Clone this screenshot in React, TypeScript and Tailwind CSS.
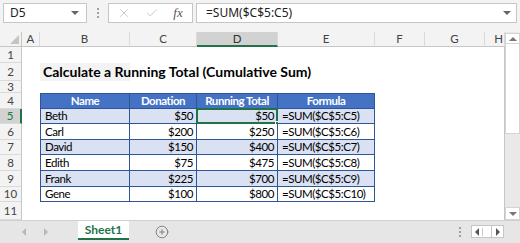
import { X, Check, CirclePlus } from "lucide-react";

const rows = [
  ["Beth", "$50", "$50", "=SUM($C$5:C5)"],
  ["Carl", "$200", "$250", "=SUM($C$5:C6)"],
  ["David", "$150", "$400", "=SUM($C$5:C7)"],
  ["Edith", "$75", "$475", "=SUM($C$5:C8)"],
  ["Frank", "$225", "$700", "=SUM($C$5:C9)"],
  ["Gene", "$100", "$800", "=SUM($C$5:C10)"],
];

const heads = ["Name", "Donation", "Running Total", "Formula"];
const cols = ["A", "B", "C", "D", "E", "F", "G", "H"];

function Tri({ dir, className }: { dir: "up" | "down" | "left" | "right"; className?: string }) {
  const pts = {
    up: "0,5 4,1 8,5",
    down: "0,1 8,1 4,5",
    left: "5,0 5,8 1,4",
    right: "1,0 1,8 5,4",
  }[dir];
  const box = dir === "up" || dir === "down" ? "0 0 8 6" : "0 0 6 8";
  const w = dir === "up" || dir === "down" ? 8 : 6;
  const h = dir === "up" || dir === "down" ? 6 : 8;
  return (
    <svg width={w} height={h} viewBox={box} className={className}>
      <polygon points={pts} fill="currentColor" />
    </svg>
  );
}

function Dots() {
  return (
    <div className="flex flex-col gap-[2px]">
      <span className="h-[2px] w-[2px] bg-[#a0a0a0]" />
      <span className="h-[2px] w-[2px] bg-[#a0a0a0]" />
      <span className="h-[2px] w-[2px] bg-[#a0a0a0]" />
    </div>
  );
}

function TableCell({ r, c }: { r: number; c: number }) {
  // r: 0 = header row (row 4), 1..6 = data rows
  const isHead = r === 0;
  const striped = !isHead && r % 2 === 1;
  const bg = isHead ? "bg-[#4472c4]" : striped ? "bg-[#d9e1f2]" : "bg-white";
  const edge = `${c === 0 ? "border-l" : ""} ${r === 0 ? "border-t" : ""}`;
  const align = isHead
    ? "justify-center font-bold text-white"
    : c === 1 || c === 2
    ? "justify-end pr-[3px] text-black"
    : "justify-start pl-[4px] text-black";
  const text = isHead ? heads[c] : rows[r - 1][c];
  const selected = r === 1 && c === 2;
  return (
    <div
      className={`relative flex items-center border-r border-b border-[#2f5597] ${edge} ${bg} ${align} text-[11.5px] leading-none tracking-[-0.45px]`}
    >
      {text}
      {selected && (
        <>
          <div className="pointer-events-none absolute inset-[-1px] border-2 border-[#217346]" />
          <div className="absolute bottom-[-3px] right-[-3px] h-[5px] w-[5px] border border-white bg-[#217346]" />
        </>
      )}
    </div>
  );
}

function GridRow({ n }: { n: number }) {
  const sel = n === 5;
  return (
    <>
      <div
        className={`flex items-center justify-center border-b border-[#dadada] text-[11.5px] ${
          sel ? "border-r-2 border-r-[#217346] bg-[#d2d2d2] text-[#217346]" : "border-r border-r-[#c6c6c6] bg-[#f3f3f3] text-[#444]"
        }`}
      >
        {n}
      </div>
      {cols.map((col, i) => {
        if (n === 2 && col === "B") {
          return (
            <div key={col} className="relative z-10 flex items-end whitespace-nowrap pb-[2px] pl-[3px] text-[14px] font-bold leading-none text-black">
              Calculate a Running Total (Cumulative Sum)
            </div>
          );
        }
        if (n >= 4 && n <= 10 && i >= 1 && i <= 4) {
          return <TableCell key={col} r={n - 4} c={i - 1} />;
        }
        return <div key={col} className={col === "H" ? "border-r border-[#c6c6c6] bg-white" : "bg-white"} />;
      })}
    </>
  );
}

export default function App() {
  return (
    <div className="flex h-[243px] w-[520px] flex-col overflow-hidden bg-[#f3f3f3] font-['Lato',sans-serif]">
      {/* formula bar */}
      <div className="flex h-[32px] shrink-0 items-start gap-0 px-[3px] pt-[3px] font-['Noto_Sans',sans-serif] text-[12px] text-[#222]">
        <div className="flex h-[20px] w-[84px] items-center justify-between border border-[#c6c6c6] bg-white pl-[6px] pr-[7px]">
          <span>D5</span>
          <Tri dir="down" className="text-[#666]" />
        </div>
        <div className="flex h-[20px] w-[21px] items-center justify-center">
          <Dots />
        </div>
        <div className="flex h-[20px] w-[85px] items-center border border-[#c6c6c6] bg-white text-[#b4b4b4]">
          <span className="flex w-[30px] justify-center">
            <X size={14} strokeWidth={1.2} />
          </span>
          <span className="flex w-[26px] justify-center">
            <Check size={14} strokeWidth={1.2} />
          </span>
          <span className="flex w-[26px] justify-center font-['Liberation_Serif',serif] text-[13px] italic text-[#555]">
            fx
          </span>
        </div>
        <div className="ml-[3px] flex h-[20px] flex-1 items-center justify-between border border-[#c6c6c6] bg-white pl-[9px] pr-[5px]">
          <span>=SUM($C$5:C5)</span>
          <Tri dir="down" className="text-[#666]" />
        </div>
      </div>

      {/* sheet */}
      <div className="flex min-h-0 flex-1">
        <div className="grid w-[505px] grid-cols-[22px_18px_90px_67px_81px_97px_50px_60px_20px] grid-rows-[15px_16px_18px_12px_16px_15px_16px_15px_16px_16px_15px_18px] overflow-hidden">
          <div className="flex items-end justify-end border-r border-b border-[#c6c6c6] bg-[#f3f3f3] p-[2px]">
            <svg width="9" height="9" viewBox="0 0 9 9">
              <polygon points="9,0 9,9 0,9" fill="#c4c4c4" />
            </svg>
          </div>
          {cols.map((c) => (
            <div
              key={c}
              className={`flex items-center text-[11.5px] ${
                c === "H" ? "justify-end pr-[1px]" : "justify-center"
              } ${
                c === "D"
                  ? "border-b-2 border-r border-b-[#217346] border-r-[#dadada] bg-[#d2d2d2] text-[#333]"
                  : "border-b border-r border-b-[#c6c6c6] border-r-[#dadada] bg-[#f3f3f3] text-[#444]"
              }`}
            >
              {c}
            </div>
          ))}
          {[1, 2, 3, 4, 5, 6, 7, 8, 9, 10, 11].map((n) => (
            <GridRow key={n} n={n} />
          ))}
        </div>

        {/* vertical scrollbar */}
        <div className="flex w-[15px] flex-col bg-[#e9e9e9] pt-[1px]">
          <div className="flex h-[11px] items-center justify-center border border-[#d4d4d4] bg-white text-[#777]">
            <Tri dir="up" />
          </div>
          <div className="h-[90px] border-x border-b border-[#d4d4d4] bg-white" />
          <div className="flex-1" />
          <div className="flex h-[13px] items-center justify-center border border-[#d4d4d4] bg-white text-[#777]">
            <Tri dir="down" />
          </div>
        </div>
      </div>

      {/* sheet tabs */}
      <div className="flex h-[23px] shrink-0 items-start border-t border-[#d0d0d0] bg-[#e6e6e6]">
        <div className="flex h-[21px] w-[78px] items-center gap-[16px] pl-[21px] text-[#b8b8b8]">
          <Tri dir="left" />
          <Tri dir="right" />
        </div>
        <div className="flex h-[19px] w-[51px] items-center justify-center border-b-2 border-[#217346] bg-white text-[12px] font-bold text-[#217346]">
          Sheet1
        </div>
        <div className="flex h-[21px] w-[66px] items-center justify-center text-[#666]">
          <CirclePlus size={14} strokeWidth={1.3} />
        </div>
        <div className="flex-1" />
        <div className="flex h-[21px] items-center pr-[10px]">
          <Dots />
        </div>
        <div className="mr-[16px] mt-[4px] flex h-[13px] items-center border border-[#c6c6c6] bg-white text-[#555]">
          <span className="flex w-[11px] justify-center border-r border-[#c6c6c6]">
            <Tri dir="left" />
          </span>
          <span className="w-[9px] border-r border-[#c6c6c6] self-stretch" />
          <span className="flex w-[11px] justify-center">
            <Tri dir="right" />
          </span>
        </div>
      </div>
    </div>
  );
}
